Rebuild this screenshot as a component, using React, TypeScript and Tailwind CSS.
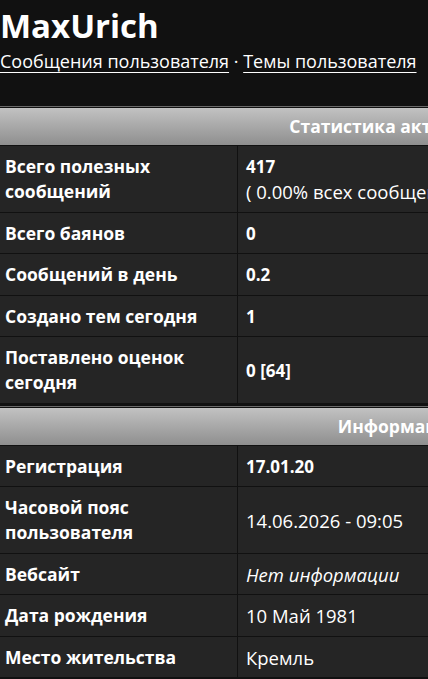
import React from "react";

type Row = {
  label: string;
  value: React.ReactNode;
};

const Bold = ({ children }: { children: React.ReactNode }) => (
  <div className="text-[17px] font-bold">{children}</div>
);

const statsRows: Row[] = [
  {
    label: "Всего полезных сообщений",
    value: (
      <>
        <Bold>417</Bold>
        <div>( 0.00% всех сообщений / 0.00 сообщений в день )</div>
      </>
    ),
  },
  { label: "Всего баянов", value: <Bold>0</Bold> },
  { label: "Сообщений в день", value: <Bold>0.2</Bold> },
  { label: "Создано тем сегодня", value: <Bold>1</Bold> },
  { label: "Поставлено оценок сегодня", value: <Bold>0 [64]</Bold> },
];

const infoRows: Row[] = [
  { label: "Регистрация", value: <Bold>17.01.20</Bold> },
  { label: "Часовой пояс пользователя", value: <div>14.06.2026 - 09:05</div> },
  { label: "Вебсайт", value: <div className="italic">Нет информации</div> },
  { label: "Дата рождения", value: <div>10 Май 1981</div> },
  { label: "Место жительства", value: <div>Кремль</div> },
];

function Section({ title, rows }: { title: string; rows: Row[] }) {
  return (
    <div className="w-[798px] border-t border-[#6a6a6a]">
      <div className="border-t border-[#111]">
        <div className="h-[37px] bg-gradient-to-b from-[#c2c2c2] to-[#8f8f8f] text-center text-[17.5px] font-bold leading-[37px] text-white">
          {title}
        </div>
      </div>
      {rows.map((row) => (
        <div
          key={row.label}
          className="grid grid-cols-[238px_1fr] border-t border-[#111] bg-[#252525] text-white"
        >
          <div className="flex items-center border-r border-[#111] px-[5px] pb-[7.5px] pt-[8px] text-[17.5px] font-bold leading-[25px]">
            <span className="w-[200px]">{row.label}</span>
          </div>
          <div className="flex flex-col justify-center whitespace-nowrap px-[8px] pb-[7.5px] pt-[8px] text-[18.5px] leading-[25px]">
            {row.value}
          </div>
        </div>
      ))}
      <div className="border-t border-[#111]" />
    </div>
  );
}

export default function App() {
  return (
    <div
      className="min-h-screen w-full overflow-x-hidden bg-[#111]"
      style={{ fontFamily: '"Open Sans", "Noto Sans", sans-serif' }}
    >
      <header className="pb-[32px] pt-[4px] text-white">
        <h1 className="text-[33px] font-bold leading-[44px]">MaxUrich</h1>
        <p className="whitespace-nowrap text-[18px] leading-[26px]">
          <a href="#" className="underline underline-offset-[4px]">
            Сообщения пользователя
          </a>{" "}
          ·{" "}
          <a href="#" className="underline underline-offset-[4px]">
            Темы пользователя
          </a>
        </p>
      </header>
      <Section title="Статистика активности" rows={statsRows} />
      <div className="h-[2px] bg-[#111]" />
      <Section title="Информация" rows={infoRows} />
    </div>
  );
}
